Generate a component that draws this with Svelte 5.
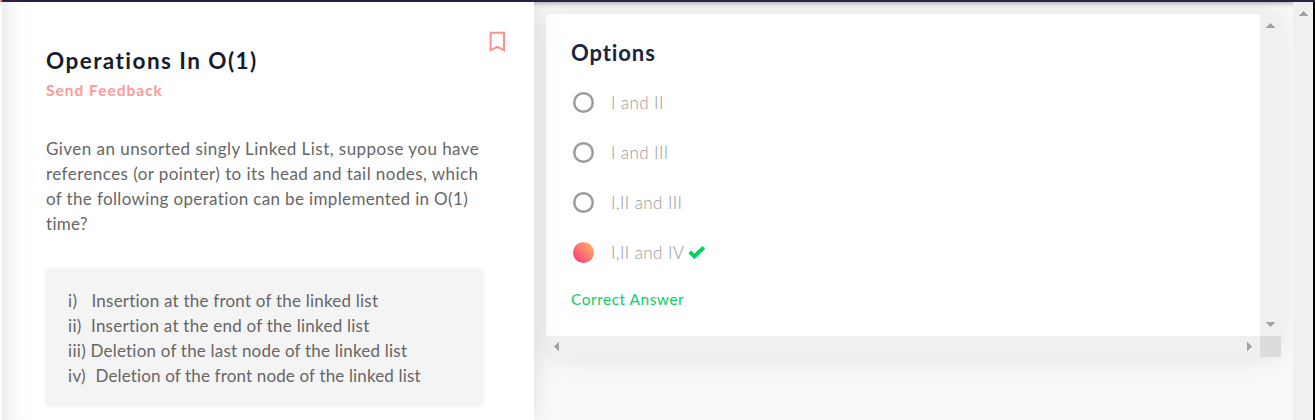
<script>
  const question = [
    { text: 'Given an unsorted singly Linked List, suppose you have', spacing: 0.46 },
    { text: 'references (or pointer) to its head and tail nodes, which', spacing: 0.44 },
    { text: 'of the following operation can be implemented in O(1)', spacing: 0.36 },
    { text: 'time?', spacing: 0.3 }
  ];
  const operations = [
    { mark: 'i)', text: 'Insertion at the front of the linked list', start: 23.5, spacing: 0.22 },
    { mark: 'ii)', text: 'Insertion at the end of the linked list', start: 23, spacing: 0.25 },
    { mark: 'iii)', text: 'Deletion of the last node of the linked list', start: 22.5, spacing: 0.21 },
    { mark: 'iv)', text: 'Deletion of the front node of the linked list', start: 27.5, spacing: 0.15 }
  ];
  const options = ['I and II', 'I and III', 'I,II and III', 'I,II and IV'];
  const correct = 3;
</script>

{#snippet arrow(dir)}
  <svg class="arrow {dir}" viewBox="0 0 9 5" shape-rendering="crispEdges"><path d="M4 0h1v1h1v1h1v1h1v1h1v1H0V4h1V3h1V2h1V1h1z" /></svg>
{/snippet}

<div class="page">
  <div class="topbar"><span></span></div>
  <main>
    <div class="edge"></div>
    <section class="problem">
      <header>
        <div>
          <h1>Operations In O(1)</h1>
          <a class="feedback">Send Feedback</a>
        </div>
        <svg class="bookmark" viewBox="0 0 18 22"><path d="M2.6 1.8h13.4v17.4L9.3 15.8 2.6 19.2z" /></svg>
      </header>
      <div class="question">
        {#each question as line}
          <div style="letter-spacing: {line.spacing}px">{line.text}</div>
        {/each}
      </div>
      <div class="operations">
        {#each operations as op}
          <div class="operation">
            <span style="width: {op.start}px">{op.mark}</span>
            <span style="letter-spacing: {op.spacing}px">{op.text}</span>
          </div>
        {/each}
      </div>
    </section>
    <section class="answers">
      <div class="card">
        <div class="content">
          <h2>Options</h2>
          {#each options as option, i}
            <div class="option">
              <span class="radio" class:checked={i === correct}></span>
              <span class="label">{option}</span>
              {#if i === correct}
                <svg class="check" viewBox="0 0 18 14"><path d="M1.8 6.9l4.6 4.5L15.8 2.4" /></svg>
              {/if}
            </div>
          {/each}
          <div class="result">Correct Answer</div>
        </div>
        <div class="vbar">{@render arrow('up')}{@render arrow('down')}</div>
        <div class="hbar">{@render arrow('left')}{@render arrow('right')}</div>
        <div class="corner"></div>
      </div>
    </section>
    <div class="pagebar">{@render arrow('up')}</div>
    <div class="frame"></div>
  </main>
</div>

<style>
  .page { width: 1315px; height: 420px; overflow: hidden; display: flex; flex-direction: column; font-family: Lato, sans-serif; color: #666; }
  .topbar { height: 2px; background: #2b2245; flex: none; }
  .topbar span { display: block; width: 2px; height: 2px; background: #fa7564; }
  main { flex: 1; display: grid; grid-template-columns: 2px 532px 759px 20px 2px; min-height: 0; }
  .edge { background: #fdfdfd; z-index: 2; }
  .problem { position: relative; z-index: 1; background: linear-gradient(90deg, #ededed, #f8f8f8 9px, #fdfdfd 20px, #fff 32px); box-shadow: 0 0 24px rgba(0, 0, 0, 0.12); padding: 0 50px 0 44px; }
  header { display: flex; justify-content: space-between; height: 134px; width: 460px; }
  h1, h2 { margin: 0; font-weight: 700; font-size: 22px; line-height: 28px; letter-spacing: 0.9px; color: #161c2d; white-space: nowrap; }
  h1 { margin-top: 45px; font-size: 22.5px; letter-spacing: 1.45px; }
  .feedback { display: block; margin-top: 5px; font-size: 15.5px; line-height: 20px; font-weight: 700; letter-spacing: 1px; color: #ff9999; }
  .bookmark { width: 18px; height: 22px; margin-top: 29px; fill: none; stroke: #ff9090; stroke-width: 2; }
  .question, .operations { font-size: 17px; line-height: 25px; white-space: pre; }
  .operations { box-sizing: border-box; width: 437px; height: 137px; margin-top: 33px; padding: 19px 22px; border-radius: 4px; background: #f4f4f4; box-shadow: 0 0 5px rgba(0, 0, 0, 0.07); }
  .operation { display: flex; }
  .operation span:first-child { flex: none; letter-spacing: 0.3px; }
  .answers { background: linear-gradient(#bdbdbd, #dedede 2px, #eee 4px, #fafafa 7px); padding: 12px; overflow: hidden; }
  .card { display: grid; grid-template-columns: 714px 21px; grid-template-rows: 322px 21px; width: 735px; box-shadow: 0 0 32px rgba(0, 0, 0, 0.1); }
  .content { background: #fff; padding: 25px 25px 0; }
  h2 { color: #1a2340; margin-bottom: 10px; }
  .option { display: flex; align-items: center; height: 50px; }
  .radio { box-sizing: border-box; width: 21px; height: 21px; margin-left: 2px; box-shadow: inset 0 0 0 2.5px #9b9b9b; border-radius: 50%; }
  .radio.checked { box-shadow: none; background: linear-gradient(45deg, #fb2e7b, #fbc166); }
  .label { margin-left: 17px; padding-top: 2px; font-size: 17px; line-height: 22px; font-weight: 300; letter-spacing: 0.41px; color: #999; }
  .check { width: 18px; height: 14px; margin-left: 3.5px; fill: none; stroke: #09ce63; stroke-width: 4; }
  .result { margin-top: 10px; font-size: 15.5px; line-height: 24px; color: #0ccf65; letter-spacing: 0.5px; }
  .vbar, .hbar, .pagebar { background: #f0f0f0; display: flex; align-items: center; }
  .vbar { flex-direction: column; justify-content: space-between; padding: 9px 0; }
  .hbar { justify-content: space-between; padding: 0 6px; }
  .corner { background: #dcdcdc; }
  .pagebar { flex-direction: column; padding-top: 9px; z-index: 2; }
  .frame { background: #000; z-index: 2; }
  .arrow { width: 9px; height: 5px; fill: #a3a3a3; display: block; }
  .down { transform: rotate(180deg); }
  .left { transform: rotate(-90deg); }
  .right { transform: rotate(90deg); }
</style>
